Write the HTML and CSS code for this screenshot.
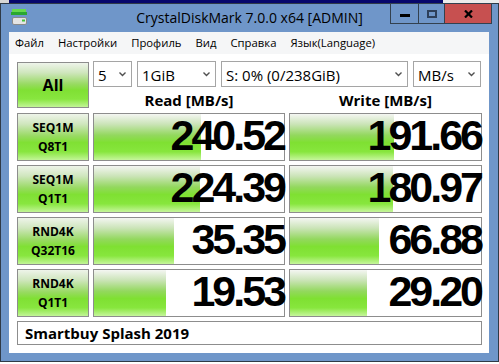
FILE: index.html
```html
<!DOCTYPE html>
<html lang="ru">
<head>
    <meta charset="UTF-8">
    <meta name="viewport" content="width=device-width, initial-scale=1.0">
    <title>CrystalDiskMark 7.0.0 x64 [ADMIN]</title>
    <link rel="stylesheet" href="styles.css">
</head>
<body>
    <div class="backdrop"></div>
    <div class="window">
        <!-- Titelbalk -->
        <div class="titlebar">
            <div class="app-icon">
                <svg width="17" height="16" viewBox="0 0 17 16">
                    <rect x="1" y="0" width="14" height="3" fill="#66da4c"/>
                    <rect x="0" y="3" width="16" height="3" fill="#2aa730"/>
                    <rect x="1.5" y="8.5" width="14" height="7" rx="1.5" fill="#e4e4e4" stroke="#8a8a8a"/>
                    <rect x="11" y="10.5" width="3" height="2" fill="#43c23a"/>
                </svg>
            </div>
            <div class="title">CrystalDiskMark 7.0.0 x64 [ADMIN]</div>
            <div class="caption-buttons">
                <div class="cap-btn min"><span class="min-glyph"></span></div>
                <div class="cap-btn max"><span class="max-glyph"></span></div>
                <div class="cap-btn close">
                    <svg width="9" height="8" viewBox="0 0 9 8">
                        <path d="M1 0.5 L8 7.5 M8 0.5 L1 7.5" stroke="#000" stroke-width="2.2"/>
                    </svg>
                </div>
            </div>
        </div>

        <div class="frame">
            <!-- Menu -->
            <ul class="menubar">
                <li>Файл</li>
                <li>Настройки</li>
                <li>Профиль</li>
                <li>Вид</li>
                <li>Справка</li>
                <li>Язык(Language)</li>
            </ul>

            <div class="client">
                <div class="grid">
                    <div class="test-btn all">All</div>
                    <div class="top-panel">
                        <div class="combos">
                            <div class="combo count"><span>5</span><svg class="chevron" width="7" height="5" viewBox="0 0 7 5"><path d="M0.5 0.5 L3.5 3.5 L6.5 0.5" fill="none" stroke="#505050" stroke-width="1.4"/></svg></div>
                            <div class="combo size"><span>1GiB</span><svg class="chevron" width="7" height="5" viewBox="0 0 7 5"><path d="M0.5 0.5 L3.5 3.5 L6.5 0.5" fill="none" stroke="#505050" stroke-width="1.4"/></svg></div>
                            <div class="combo drive"><span>S: 0% (0/238GiB)</span><svg class="chevron" width="7" height="5" viewBox="0 0 7 5"><path d="M0.5 0.5 L3.5 3.5 L6.5 0.5" fill="none" stroke="#505050" stroke-width="1.4"/></svg></div>
                            <div class="combo unit"><span>MB/s</span><svg class="chevron" width="7" height="5" viewBox="0 0 7 5"><path d="M0.5 0.5 L3.5 3.5 L6.5 0.5" fill="none" stroke="#505050" stroke-width="1.4"/></svg></div>
                        </div>
                        <div class="headers">
                            <div>Read [MB/s]</div>
                            <div>Write [MB/s]</div>
                        </div>
                    </div>

                    <div class="test-btn">SEQ1M<br>Q8T1</div>
                    <div class="result" style="--bar: 107px"><span class="value">240.52</span></div>
                    <div class="result" style="--bar: 104px"><span class="value">191.66</span></div>

                    <div class="test-btn">SEQ1M<br>Q1T1</div>
                    <div class="result" style="--bar: 106px"><span class="value">224.39</span></div>
                    <div class="result" style="--bar: 103px"><span class="value">180.97</span></div>

                    <div class="test-btn">RND4K<br>Q32T16</div>
                    <div class="result" style="--bar: 80px"><span class="value">35.35</span></div>
                    <div class="result" style="--bar: 89px"><span class="value">66.88</span></div>

                    <div class="test-btn">RND4K<br>Q1T1</div>
                    <div class="result" style="--bar: 72px"><span class="value">19.53</span></div>
                    <div class="result" style="--bar: 77px"><span class="value">29.20</span></div>

                    <div class="comment">Smartbuy Splash 2019</div>
                </div>
            </div>
        </div>
    </div>
</body>
</html>
```

FILE: styles.css
```css
* {
    box-sizing: border-box;
}
body {
    margin: 0;
    background: #ffffff;
    font-family: "Open Sans", "Noto Sans", sans-serif;
    color: #000;
}
.backdrop {
    height: 3px;
    background: linear-gradient(to right, #d6d6d6 0 9px, #07076c 9px 443px, #ececec 443px);
}
.window {
    width: 499px;
    border: 1px solid #2f3a47;
    background: #6f96c9;
}
.titlebar {
    height: 28px;
    display: grid;
    grid-template-columns: 1fr auto 1fr;
    align-items: start;
}
.app-icon {
    margin: 5px 0 0 10px;
    width: 17px;
    height: 16px;
}
.app-icon svg {
    display: block;
}
.title {
    font-size: 14px;
    line-height: 28px;
    white-space: nowrap;
}
.caption-buttons {
    justify-self: end;
    display: flex;
    margin: -1px 6px 0 0;
}
.cap-btn {
    height: 21px;
    border: 1px solid #33414f;
    margin-left: -1px;
    display: flex;
    align-items: center;
    justify-content: center;
}
.cap-btn.min {
    width: 29px;
    margin-left: 0;
}
.cap-btn.max {
    width: 27px;
}
.cap-btn.close {
    width: 48px;
    background: #c75050;
}
.min-glyph {
    width: 10px;
    height: 3px;
    background: #000;
    margin-top: 3px;
}
.max-glyph {
    width: 10px;
    height: 8px;
    border: 2px solid #2d3f5a;
}
.cap-btn svg {
    display: block;
}
.frame {
    padding: 0 9px 8px 8px;
}
.menubar {
    list-style: none;
    margin: 0;
    padding: 0 0 0 6px;
    height: 22px;
    display: flex;
    gap: 14px;
    background: #f5f6f7;
    font-size: 11.3px;
    line-height: 22px;
}
.client {
    background: #ffffff;
    padding: 8px;
}
.grid {
    display: grid;
    grid-template-columns: 72px 192px 193px;
    grid-template-rows: 47px repeat(4, 48px) 24px;
    gap: 4px;
}
.test-btn {
    border: 1px solid #8d8d8d;
    background: linear-gradient(to bottom, #eef4ea 0%, #cfe6bd 22%, #98da62 48%, #80e034 62%, #88e63f 82%, #c2f597 100%);
    display: flex;
    flex-direction: column;
    align-items: center;
    justify-content: center;
    text-align: center;
    font-size: 12px;
    font-weight: 700;
    line-height: 19px;
}
.test-btn.all {
    height: 46px;
    font-size: 16px;
}
.top-panel {
    grid-column: 2 / 4;
    margin-top: -1px;
}
.combos {
    display: flex;
    gap: 5px;
}
.combo {
    height: 26px;
    border: 1px solid #a5a5a5;
    background: #fff;
    display: flex;
    align-items: center;
    justify-content: space-between;
    padding: 1px 5px 0 4px;
    font-size: 15px;
}
.combo.count { width: 39px; }
.combo.size { width: 79px; }
.combo.drive { width: 187px; }
.combo.unit { width: 68px; }
.chevron {
    display: block;
}
.headers {
    display: grid;
    grid-template-columns: 192px 193px;
    column-gap: 4px;
    height: 26px;
    line-height: 26px;
    text-align: center;
    font-size: 15px;
    font-weight: 700;
}
.result {
    border: 1px solid #8d8d8d;
    background-color: #fff;
    background-image: linear-gradient(to bottom, #f4f6f2 0%, #cbe4b8 22%, #93d85e 46%, #7fe032 62%, #87e63d 82%, #c6f69c 100%);
    background-size: var(--bar) 100%;
    background-repeat: no-repeat;
    display: flex;
    justify-content: flex-end;
    align-items: flex-start;
    padding-right: 0;
}
.value {
    font-family: "Liberation Sans", Arial, sans-serif;
    font-size: 43px;
    font-weight: 700;
    line-height: 42px;
    letter-spacing: -3px;
}
.comment {
    grid-column: 1 / 4;
    border: 1px solid #8d8d8d;
    padding-left: 7px;
    font-size: 15px;
    font-weight: 700;
    line-height: 22px;
}
```
